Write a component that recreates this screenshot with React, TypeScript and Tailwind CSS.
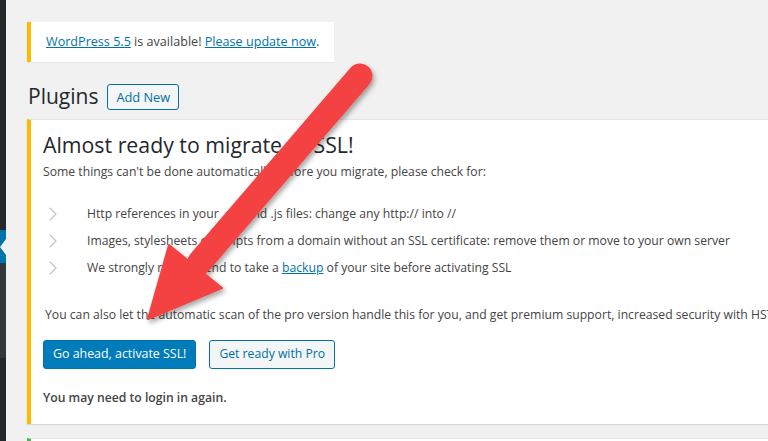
import { ChevronRight } from "lucide-react";

const font = { fontFamily: '"Open Sans", "Noto Sans", sans-serif' };

function AdminMenuEdge() {
    return (
        <aside className="flex w-[6px] shrink-0 flex-col">
            <div className="h-[230px] bg-[#23282d]" />
            <div className="relative h-[33px] bg-[#0073aa]">
                <span className="absolute right-0 top-[9px] h-0 w-0 border-y-[8px] border-r-[6px] border-y-transparent border-r-[#f1f1f1]" />
            </div>
            <div className="h-[95px] bg-[#32373c]" />
            <div className="flex-1 bg-[#23282d]" />
        </aside>
    );
}

function RedArrow() {
    return (
        <svg className="pointer-events-none absolute left-0 top-0" width="768" height="441" viewBox="0 0 768 441">
            <defs>
                <filter id="arrowShadow" x="-20%" y="-20%" width="140%" height="140%">
                    <feDropShadow dx="2" dy="3" stdDeviation="2.5" floodColor="#000" floodOpacity="0.35" />
                </filter>
            </defs>
            <g filter="url(#arrowShadow)" fill="#f44242" stroke="#f44242">
                <line x1="360" y1="76" x2="200" y2="262" strokeWidth="25" strokeLinecap="round" />
                <polygon points="169,245 222,288 148,319" strokeWidth="2" strokeLinejoin="round" />
            </g>
        </svg>
    );
}

const checks = [
    <>Http references in your .css and .js files: change any http:// into //</>,
    <>Images, stylesheets or scripts from a domain without an SSL certificate: remove them or move to your own server</>,
    <>
        We strongly recommend to take a <a className="text-[#0073aa] underline">backup</a> of your site before activating SSL
    </>,
];

export default function App() {
    return (
        <div className="relative flex h-[441px] overflow-hidden bg-[#f1f1f1] text-[12.2px] text-[#444]" style={font}>
            <AdminMenuEdge />

            <main className="min-w-0 flex-1 pl-[21px] pt-[22px]">
                {/* Core update nag */}
                <div className="flex h-[40px] w-[307px] items-center border-l-4 border-[#ffb900] bg-white pl-[15px] text-[12.6px] shadow-[0_1px_1px_rgba(0,0,0,0.04)]">
                    <p>
                        <a className="text-[#0073aa] underline">WordPress 5.5</a> is available!{" "}
                        <a className="text-[#0073aa] underline">Please update now</a>.
                    </p>
                </div>

                {/* Page title */}
                <div className="mt-[20px] flex items-center gap-[9px] pl-px">
                    <h1 className="text-[21px] leading-[29px] text-[#23282d]">Plugins</h1>
                    <button className="mt-[1px] h-[26px] rounded-[3px] border border-[#0071a1] bg-[#f3f5f6] px-[8px] text-[12.8px] leading-[24px] text-[#0071a1]">
                        Add New
                    </button>
                </div>

                {/* SSL notice */}
                <div className="mt-[8px] h-[305px] w-[800px] border-t border-l-4 border-t-[#e5e5e5] border-l-[#ffb900] bg-white pl-[12px] shadow-[0_1px_1px_rgba(0,0,0,0.1)]">
                    <h2 className="pt-[10px] text-[21.3px] leading-[30px] text-[#23282d]">Almost ready to migrate to SSL!</h2>
                    <p className="mt-[2px] leading-[20px]">
                        Some things can't be done automatically before you migrate, please check for:
                    </p>

                    <ul className="mt-[22px] flex flex-col gap-[7px]">
                        {checks.map((item, i) => (
                            <li key={i} className="flex h-[20px] items-center">
                                <ChevronRight size={24} strokeWidth={1.1} className="-ml-[2px] shrink-0 text-[#c4c4c4]" />
                                <span className="ml-[22px] whitespace-nowrap">{item}</span>
                            </li>
                        ))}
                    </ul>

                    <p className="mt-[27px] whitespace-nowrap pl-[2px] leading-[20px]">
                        You can also let the automatic scan of the pro version handle this for you, and get premium support, increased security with HSTS and more!
                    </p>

                    <div className="mt-[15px] flex gap-[13px]">
                        <button className="h-[29px] rounded-[3px] border border-[#0073aa] bg-[#007cba] px-[9px] text-[12.4px] text-white">
                            Go ahead, activate SSL!
                        </button>
                        <button className="h-[29px] rounded-[3px] border border-[#0071a1] bg-[#f3f5f6] px-[9px] text-[12.2px] text-[#0071a1]">
                            Get ready with Pro
                        </button>
                    </div>

                    <p className="mt-[19px] font-semibold leading-[20px]">You may need to login in again.</p>
                </div>

                {/* next notice peeking in */}
                <div className="mt-[14px] h-[20px] w-[800px] border-t border-l-4 border-t-[#e5e5e5] border-l-[#46b450] bg-white" />
            </main>

            <RedArrow />
        </div>
    );
}
